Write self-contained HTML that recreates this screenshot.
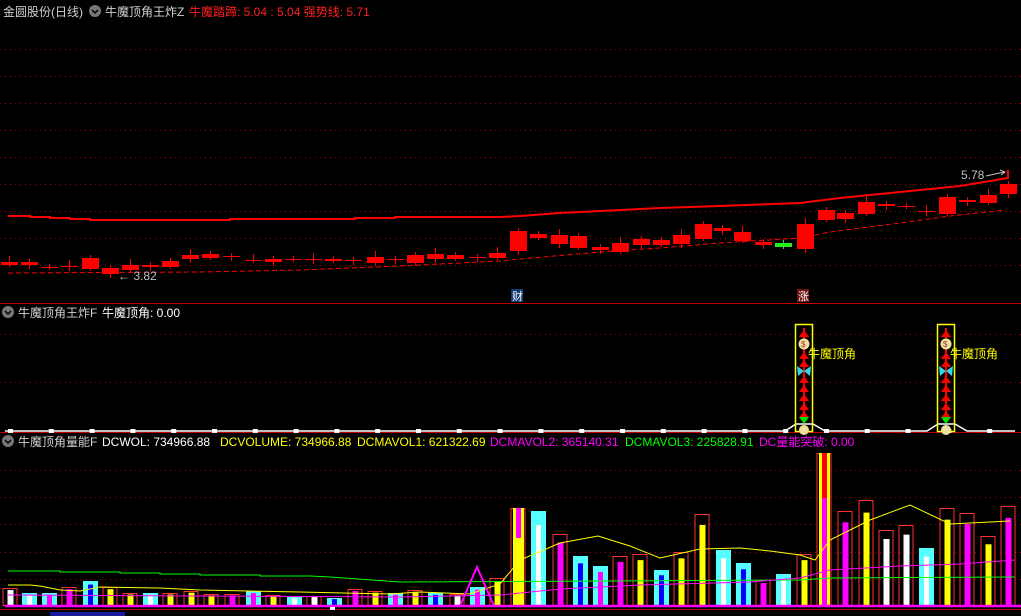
<!DOCTYPE html>
<html><head><meta charset="utf-8"><style>
html,body{margin:0;padding:0;background:#000;width:1021px;height:616px;overflow:hidden}
svg{display:block}
text{font-family:"Liberation Sans","Noto Sans CJK SC",sans-serif;font-size:12px}
</style></head><body>
<svg id="s" width="1021" height="616" xmlns="http://www.w3.org/2000/svg">
<g id="grid" stroke="#a00010" stroke-width="1" stroke-dasharray="1 4"></g>
<line x1="0" y1="303.5" x2="1021" y2="303.5" stroke="#c00000"/>
<line x1="0" y1="432.5" x2="1021" y2="432.5" stroke="#c00000"/>
<line x1="0" y1="609.5" x2="1021" y2="609.5" stroke="#c00000"/>
<rect x="50" y="612" width="75" height="4" fill="#1a1a9a"/>
<g id="g1"></g>
<text x="3" y="16" fill="#d0d0d0">金圆股份(日线)</text>
<circle cx="95" cy="11" r="6" fill="#777"/><path d="M92 10 L95 13 L98 10" stroke="#000" stroke-width="1.5" fill="none"/>
<text x="105" y="16" fill="#d0d0d0">牛魔顶角王炸Z</text>
<text x="189" y="16" fill="#ff2020">牛魔踏蹄: 5.04 : 5.04  强势线: 5.71</text>
<circle cx="8" cy="312" r="6" fill="#777"/><path d="M5 311 L8 314 L11 311" stroke="#000" stroke-width="1.5" fill="none"/>
<text x="18" y="317" fill="#d0d0d0">牛魔顶角王炸F</text>
<text x="102" y="317" fill="#fff">牛魔顶角: 0.00</text>
<circle cx="8" cy="441" r="6" fill="#777"/><path d="M5 440 L8 443 L11 440" stroke="#000" stroke-width="1.5" fill="none"/>
<text x="18" y="446" fill="#d0d0d0">牛魔顶角量能F</text>
<text x="102" y="446" fill="#fff">DCWOL: 734966.88</text>
<text x="220" y="446" fill="#ffff00">DCVOLUME: 734966.88</text>
<text x="357" y="446" fill="#ffff00">DCMAVOL1: 621322.69</text>
<text x="490" y="446" fill="#ff00ff">DCMAVOL2: 365140.31</text>
<text x="625" y="446" fill="#00ff00">DCMAVOL3: 225828.91</text>
<text x="759" y="446" fill="#ff00ff">DC量能突破: 0.00</text>
<text x="118" y="280" fill="#c0c0c0">← 3.82</text>
<text x="961" y="179" fill="#c0c0c0">5.78</text>
<path d="M986 176 L1004 172 M1000 170 L1005 172 L1001 175" stroke="#c0c0c0" fill="none"/>
<rect x="511" y="289" width="12" height="13" fill="#103a70"/><text x="512" y="300" fill="#fff" style="font-size:11px">财</text>
<rect x="797" y="289" width="12" height="13" fill="#701010"/><text x="798" y="300" fill="#fff" style="font-size:11px">涨</text>
<text x="808" y="358" fill="#ffff00">牛魔顶角</text>
<text x="950" y="358" fill="#ffff00">牛魔顶角</text>
</svg>
<script>
var NS="http://www.w3.org/2000/svg",g=document.getElementById('g1'),gr=document.getElementById('grid');
function el(t,a,p){var e=document.createElementNS(NS,t);for(var k in a)e.setAttribute(k,a[k]);(p||g).appendChild(e);return e}
[49,76,103,130,157,184,211,238,265,334,382,470,497,524,552,579].forEach(function(y){el('line',{x1:0,y1:y+.5,x2:1021,y2:y+.5},gr)});
var c=[[9,262,265],[29,262,265],[49,267,268],[69,266,267],[90,258,269],[110,268,274],[130,265,270],[150,265,267],[170,261,267],[190,255,259],[210,254,258],[231,256,257],[253,260,261],[273,259,262],[293,259,260],[313,259,260],[333,259,261],[353,260,261],[375,257,263],[395,259,260],[415,255,263],[435,254,259],[455,255,259],[477,257,258],[497,253,258],[518,231,251],[538,234,238],[559,235,244],[578,236,248],[600,247,250],[620,243,252],[641,239,245],[661,240,245],[681,235,244],[703,224,239],[722,228,231],[742,232,241],[763,242,245],[783,243,247,1],[805,224,249],[826,210,220],[845,213,219],[866,202,214],[886,204,206],[906,206,207],[926,211,212],[947,197,214],[967,200,202],[988,195,203],[1008,184,194]];
c.forEach(function(d,i){var col=d[3]?'#22ee22':'#ff0000';var h=Math.max(1,d[2]-d[1]);
el('line',{x1:d[0]+.5,y1:d[1]-(i%3==0?6:3),x2:d[0]+.5,y2:d[2]+(i%2?4:2),stroke:col});
el('rect',{x:d[0]-8,y:d[1],width:17,height:h,fill:col});});
el('polyline',{points:'8,216 30,216 30,217 50,217 50,218 70,218 70,219 90,219 90,220 230,220 230,219 355,219 355,218 395,218 395,217 500,217 520,216 560,213 600,211 660,208 720,206 800,203 840,198 900,192 960,186 1008,178 1008,170',stroke:'#ff0000','stroke-width':2,fill:'none'});
el('polyline',{points:'8,273 200,272 300,270 400,266 500,261 520,259 600,252 660,248 720,243 800,238 830,232 900,223 950,216 1005,210',stroke:'#ff0000','stroke-width':1,'stroke-dasharray':'5 3',fill:'none'});
el('polyline',{points:'5,431 785,431 796,424 813,424 825,431 927,431 938,424 955,424 967,431 1015,431',stroke:'#fff','stroke-width':1.5,fill:'none'});
for(var x=10;x<1010;x+=40.8){el('rect',{x:x-2,y:429,width:5,height:4,fill:'#fff'})}
[804,946].forEach(function(cx){
el('rect',{x:cx-8.5,y:324.5,width:17,height:107,stroke:'#ffff00',fill:'none','stroke-width':1.5});
el('line',{x1:cx,y1:328,x2:cx,y2:420,stroke:'#ff0000','stroke-width':2});
[332,354,362,378,387,396,405,413].forEach(function(y){el('path',{d:'M'+(cx-5)+' '+(y+5)+' L'+cx+' '+(y-2)+' L'+(cx+5)+' '+(y+5)+'Z',fill:'#ff0000'})});
el('circle',{cx:cx,cy:344,r:5.5,fill:'#f0e0a0'});el('text',{x:cx-3,y:347,fill:'#a03030',style:'font-size:8px'}).textContent='$';
el('circle',{cx:cx,cy:430,r:5,fill:'#f0e0a0'});
el('path',{d:'M'+cx+' 371 L'+(cx-7)+' 366 L'+(cx-6)+' 376 Z M'+cx+' 371 L'+(cx+7)+' 366 L'+(cx+6)+' 376 Z',fill:'#30d8e8'});
el('path',{d:'M'+(cx-5)+' 417 L'+(cx+5)+' 417 L'+cx+' 424Z',fill:'#00dd00'});
});
var V=[[10,588,'ow'],[29,593,'cw'],[49,593,'cm'],[69,587,'om'],[90,581,'cb'],[110,587,'oy'],[130,593,'oy'],[150,593,'cw'],[170,593,'oy'],[191,591,'oy'],[211,594,'oy'],[232,594,'om'],[253,591,'cm'],[273,595,'oy'],[294,597,'cw'],[314,596,'ow'],[334,598,'cb'],[355,589,'om'],[375,591,'oy'],[395,593,'cm'],[415,590,'oy'],[435,593,'cb'],[457,594,'ow'],[477,587,'cm'],[497,578,'oy'],[518,508,'oY'],[538,511,'cw'],[560,534,'om'],[580,556,'cb'],[600,566,'cm'],[620,556,'om'],[640,554,'oy'],[661,570,'cb'],[681,552,'oy'],[702,514,'oy'],[723,550,'cw'],[743,563,'cb'],[763,580,'om'],[783,574,'cw'],[804,554,'oy'],[824,453,'oR'],[845,511,'om'],[866,500,'oy'],[886,530,'ow'],[906,525,'ow'],[926,548,'cw'],[947,508,'oy'],[967,513,'om'],[988,536,'oy'],[1008,506,'om']];
var col={w:'#fff',m:'#ff00ff',y:'#ffff00',b:'#0000ff',Y:'#ffff00',R:'#ffff00'};
V.forEach(function(v){var x=v[0],t=v[1],k=v[2],b=605;
if(k[0]=='c'){el('rect',{x:x-7,y:t,width:15,height:b-t,fill:'#55ffff'});el('rect',{x:x-2,y:t+(b-t)*0.15,width:5,height:(b-t)*0.85,fill:col[k[1]]});}
else{el('rect',{x:x-7,y:t+.5,width:14,height:b-t,stroke:'#ff3030',fill:'none'});
if(k[1]=='Y'){el('rect',{x:x-5,y:t,width:11,height:b-t,fill:'#ffff00'});el('rect',{x:x-2,y:t,width:5,height:30,fill:'#ff00ff'})}
else if(k[1]=='R'){el('rect',{x:x-5,y:t,width:11,height:b-t,fill:'#ffff00'});el('rect',{x:x-2,y:t,width:5,height:45,fill:'#ff0000'});el('rect',{x:x-2,y:t+45,width:5,height:b-t-45,fill:'#ff00ff'})}
else{var it=t+(b-t)*0.12;el('rect',{x:x-2.5,y:it,width:6,height:b-it,fill:col[k[1]]});}}});
el('polyline',{points:'8,571 60,571 60,572 120,572 120,573 160,573 160,574 200,574 200,575 260,575 260,576 310,576 330,577 400,582 800,580 830,578 1015,577',stroke:'#00ff00',fill:'none'});
el('polyline',{points:'8,585 30,585 40,586 60,590 80,591 100,587 160,588 200,590 300,592 390,594 420,592 470,594 500,584 520,560 560,543 598,536 630,546 660,558 700,549 740,548 770,551 800,555 815,560 830,540 870,520 910,505 950,524 1010,521',stroke:'#ffff00',fill:'none'});
el('polyline',{points:'8,595 200,596 400,597 500,595 560,589 640,585 750,582 800,578 830,570 900,566 960,564 1015,560',stroke:'#ff00ff',fill:'none'});
el('polyline',{points:'460,606 477,567 494,606',stroke:'#ff00ff','stroke-width':2,fill:'none'});
el('line',{x1:5,y1:606,x2:1021,y2:606,stroke:'#ff00ff','stroke-width':2.5});
el('rect',{x:330,y:607,width:5,height:3,fill:'#fff'});
</script>
</body></html>
